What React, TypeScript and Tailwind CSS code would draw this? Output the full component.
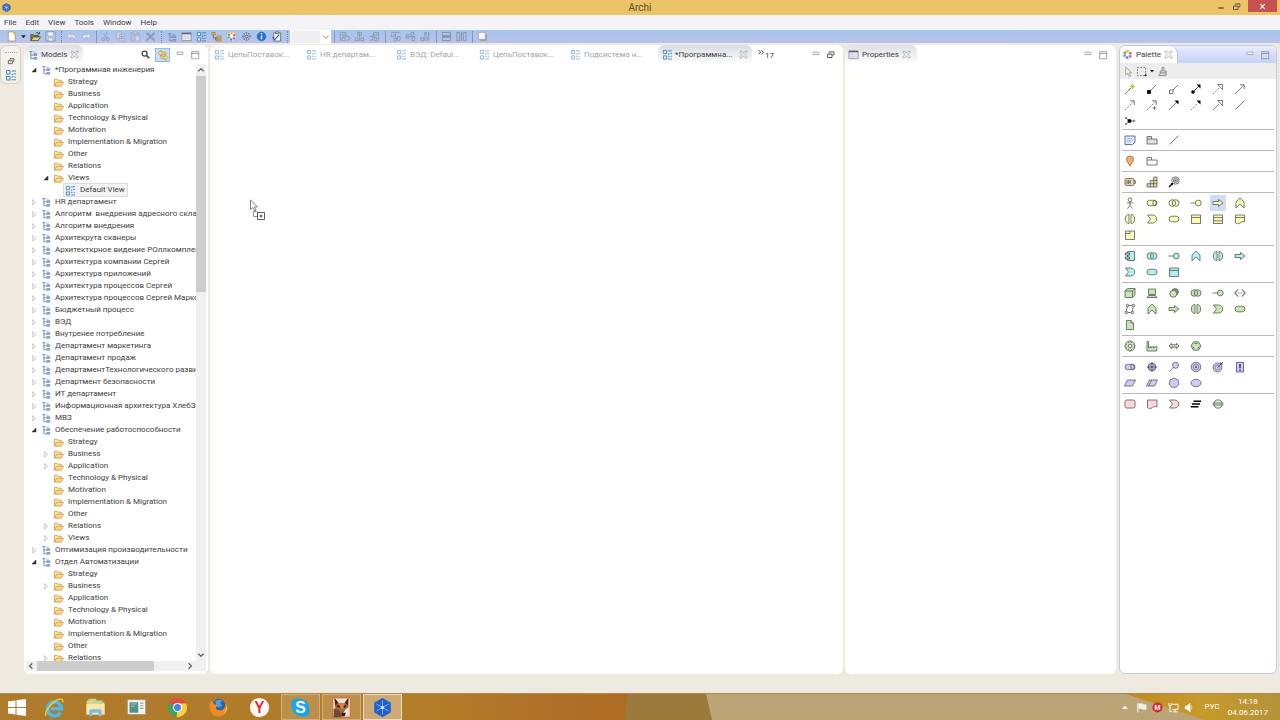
import { ReactNode } from "react";
import clsx from "clsx";

type IconProps = {
  children: ReactNode;
  className?: string;
};

type TreeRow = {
  label: string;
  level: 0 | 1 | 2;
  state?: "open" | "closed";
  selected?: boolean;
};

type EditorTab = {
  label: string;
  width: string;
};

type PaletteGroup = {
  fill: string;
  tools: string[];
};

const folders = [
  "Strategy",
  "Business",
  "Application",
  "Technology & Physical",
  "Motivation",
  "Implementation & Migration",
  "Other",
  "Relations",
  "Views",
];

function folderRows(closed: string[], open: string[] = []): TreeRow[] {
  return folders.map((label) => ({
    label,
    level: 1,
    state: open.includes(label) ? "open" : closed.includes(label) ? "closed" : undefined,
  }));
}

function closedModels(labels: string[]): TreeRow[] {
  return labels.map((label) => ({ label, level: 0, state: "closed" }));
}

const treeRows: TreeRow[] = [
  { label: "*Программная инженерия", level: 0, state: "open" },
  ...folderRows([], ["Views"]),
  { label: "Default View", level: 2, selected: true },
  ...closedModels([
    "HR департамент",
    "Алгоритм  внедрения адресного склад",
    "Алгоритм внедрения",
    "Архитекрута сканеры",
    "Архитекткрное видение РОллкомплек",
    "Архитектура компании Сергей",
    "Архитектура приложений",
    "Архитектура процессов Сергей",
    "Архитектура процессов Сергей Марко",
    "Бюджетный процесс",
    "ВЭД",
    "Внутренее потребление",
    "Департамент маркетинга",
    "Департамент продаж",
    "ДепартаментТехнологического развит",
    "Департмент безопасности",
    "ИТ департамент",
    "Информационная архитектура ХлебЗа",
    "МВЗ",
  ]),
  { label: "Обеспечение работоспособности", level: 0, state: "open" },
  ...folderRows(["Business", "Application", "Relations", "Views"]),
  { label: "Оптимизация производительности", level: 0, state: "closed" },
  { label: "Отдел Автоматизации", level: 0, state: "open" },
  ...folderRows(["Business", "Relations"]).slice(0, 8),
];

const editorTabs: EditorTab[] = [
  { label: "ЦепьПоставок...", width: "w-[92px]" },
  { label: "HR департам...", width: "w-[90px]" },
  { label: "ВЭД: Defaul...", width: "w-[83px]" },
  { label: "ЦепьПоставок...", width: "w-[91px]" },
  { label: "Подсистема н...", width: "w-[88px]" },
];

const paletteGroups: PaletteGroup[] = [
  {
    fill: "#ffffff",
    tools: [
      "magic", "composition", "aggregation", "assignment", "realization", "serving",
      "access", "influence", "triggering", "flow", "specialization", "association",
      "junction",
    ],
  },
  { fill: "#e3ecfb", tools: ["note", "group", "association"] },
  { fill: "#ffffff", tools: ["location", "grouping"] },
  { fill: "#ecd9a9", tools: ["resource", "capability", "course"] },
  {
    fill: "#fafcb4",
    tools: [
      "actor", "role", "collaboration", "interface", "process", "function",
      "interaction", "event", "service", "object", "contract", "representation",
      "product",
    ],
  },
  {
    fill: "#aef1f0",
    tools: [
      "component", "collaboration", "interface", "function", "interaction", "process",
      "event", "service", "object",
    ],
  },
  {
    fill: "#c6e6b4",
    tools: [
      "node", "device", "software", "collaboration", "interface", "path",
      "network", "function", "process", "interaction", "event", "service",
      "artifact",
    ],
  },
  { fill: "#c6e6b4", tools: ["equipment", "facility", "distribution", "material"] },
  {
    fill: "#d0cbfc",
    tools: [
      "role", "driver", "assessment", "goal", "outcome", "principle",
      "requirement", "constraint", "meaning", "value",
    ],
  },
  { fill: "#fbd6da", tools: ["work", "deliverable", "event", "plateau", "gap"] },
];

function Icon({ children, className = "size-3" }: IconProps) {
  return (
    <svg
      viewBox="0 0 12 12"
      fill="none"
      stroke="#5a5a5a"
      strokeWidth="0.8"
      className={clsx("shrink-0", className)}
      aria-hidden="true"
    >
      {children}
    </svg>
  );
}

function DiagramIcon({ className = "size-[11px]" }: { className?: string }) {
  return (
    <Icon className={className}>
      <g stroke="#3d8ab8" strokeWidth="1">
        <path d="M1.500 1.500h3.500v3.500h-3.500zM1.500 7.500h3.500v3.500h-3.500z" fill="#e4f2fa" />
        <path d="M6.500 2h4.500M8.500 4.800h2.500M6.500 8h2M9.500 8h1.500M6.500 10.800h4.500" />
        <path d="M7.200 4.800v1.500" stroke="#6a6a6a" />
      </g>
    </Icon>
  );
}

function ModelIcon() {
  return (
    <Icon className="size-[10px]">
      <path d="M1.500 2h3.500M3.500 2v8.500h3M3.500 6h3" stroke="#6a87ad" strokeWidth="1.100" />
      <path d="M7 4.500h3.500v2H7zM7 9h3.500v2H7z" fill="#a9bfdc" stroke="#5a7aa5" />
      <path d="M5.500 2.500h4" stroke="#8ea8cb" />
    </Icon>
  );
}

function FolderIcon() {
  return (
    <Icon className="size-[11px]">
      <path d="M1.500 10V2.500h3l1 1h3.500v2.200" fill="#fbe8ae" stroke="#c4933a" />
      <path d="M1.500 10l2.200-4.300h7.800l-2.500 4.300z" fill="#fbd98a" stroke="#c4933a" />
    </Icon>
  );
}

function TableIcon() {
  return (
    <Icon className="size-[11px]">
      <path d="M1 2h10v8.500H1z" fill="#e9ebf5" stroke="#7d8090" />
      <path d="M1 2.800h10" stroke="#62678c" strokeWidth="1.600" />
      <path d="M2 5.800h8M2 8h8M4.500 4.500v5" stroke="#c1c5d6" strokeWidth="0.600" />
    </Icon>
  );
}

function PaletteIcon() {
  return (
    <Icon className="size-[11px]">
      <circle cx="6" cy="6" r="5" fill="#fff" stroke="#c9b78a" strokeWidth="0.600" />
      <g stroke="none">
        <circle cx="6" cy="2.800" r="1.400" fill="#f0b43c" />
        <circle cx="9" cy="4.600" r="1.400" fill="#e0624d" />
        <circle cx="8.700" cy="7.900" r="1.400" fill="#a968c4" />
        <circle cx="5.600" cy="9.200" r="1.400" fill="#4d80d8" />
        <circle cx="3" cy="7.200" r="1.400" fill="#45aebd" />
        <circle cx="3.200" cy="4.200" r="1.400" fill="#64b04b" />
      </g>
    </Icon>
  );
}

function CloseCross() {
  return (
    <Icon className="size-[9px]">
      <path
        d="M1.500 1.500h2L6 4.200l2.500-2.700h2v2L8 6l2.500 2.500v2h-2L6 7.800l-2.500 2.700h-2v-2L4 6 1.500 3.500z"
        stroke="#888"
      />
    </Icon>
  );
}

function RestoreIcon({ className = "size-[9px]" }: { className?: string }) {
  return (
    <Icon className={className}>
      <path d="M4.500 4.500v-2h6v4h-2" stroke="#555" strokeWidth="1.300" />
      <path d="M2 5.500h6V10H2z" stroke="#555" strokeWidth="1.300" />
    </Icon>
  );
}

function MinimizeIcon() {
  return (
    <Icon className="size-[10px]">
      <path d="M2.500 2.500h7v3h-7z" stroke="#888" fill="#fff" />
    </Icon>
  );
}

function MaximizeIcon() {
  return (
    <Icon className="size-[10px]">
      <path d="M2 2h8.500v8.500H2zM2 4.200h8.500" stroke="#777" />
    </Icon>
  );
}

function ArchiLogo({ className }: { className?: string }) {
  return (
    <Icon className={className}>
      <path d="M6 .5l4.900 2.800v5.400L6 11.500 1.100 8.700V3.300z" fill="#2a68cf" stroke="#2a60b8" />
      <path d="M6 2v8M2.500 4l7 4M9.500 4l-7 4" stroke="#a9cbff" strokeWidth="0.600" />
      <circle cx="6" cy="6" r="1" fill="#fff" stroke="none" />
    </Icon>
  );
}

const dash = { strokeDasharray: "1.4 1" };

function paletteShape(name: string, fill: string): ReactNode {
  switch (name) {
    case "magic":
      return (
        <>
          <path d="M1 11l6-6" />
          <path d="M8.500 1v5M6 3.500h5M7 2l3 3M10 2L7 5" stroke="#cfc04c" strokeWidth="1" />
        </>
      );
    case "composition":
      return (
        <>
          <path d="M4 8l6-6" />
          <path d="M1.500 7.500h3v3h-3z" fill="#000" stroke="#000" />
        </>
      );
    case "aggregation":
      return (
        <>
          <path d="M5 7l5-5" />
          <path d="M1.500 7h3.500v3.500H1.500z" fill={fill} />
        </>
      );
    case "assignment":
      return (
        <>
          <path d="M3 9l6-6" stroke="#222" />
          <circle cx="3" cy="9" r="1.800" fill="#000" stroke="none" />
          <path d="M6.500 1.500H10.500V5.500z" fill="#000" stroke="none" />
        </>
      );
    case "realization":
      return (
        <>
          <path d="M1 11l6-6" {...dash} />
          <path d="M5.500 1.500h5v5z" fill={fill} />
        </>
      );
    case "serving":
      return <path d="M1 11l9-9M6 1.800h4.200V6" />;
    case "access":
      return (
        <>
          <path d="M1 11l9-9" {...dash} />
          <path d="M6 1.800h4.200V6" />
        </>
      );
    case "influence":
      return (
        <>
          <path d="M1 11l9-9" {...dash} />
          <path d="M6 1.800h4.200V6M8.500 7v4M6.500 9h4" />
        </>
      );
    case "triggering":
      return (
        <>
          <path d="M1 11l8-8" />
          <path d="M6.500 1.500h4V5.500z" fill="#000" stroke="none" />
        </>
      );
    case "flow":
      return (
        <>
          <path d="M1 11l8-8" {...dash} />
          <path d="M6.500 1.500h4V5.500z" fill="#000" stroke="none" />
        </>
      );
    case "specialization":
      return (
        <>
          <path d="M1 11l6-6" />
          <path d="M5.500 1.500h5v5z" fill={fill} />
        </>
      );
    case "association":
      return <path d="M1.500 10.500l9-9" />;
    case "junction":
      return (
        <>
          <path d="M1.500 2.500l3 3M1.500 9.500l3-3M6 6h5.500" />
          <circle cx="5.500" cy="6" r="2" fill="#000" stroke="none" />
          <path d="M1.500 4V2.500H3M1.500 8v1.500H3M9 4.800L10.500 6 9 7.200" />
        </>
      );
    case "note":
      return (
        <>
          <path d="M1 2h10v6l-2.500 2.500H1z" fill={fill} stroke="#41567e" />
          <path d="M3 4.500h5M3 6.200h6M3 8h4" stroke="#7b9ad0" strokeWidth="0.600" />
        </>
      );
    case "group":
      return <path d="M1 10V2.500h4.500V5H11v5zM1 5h4.500" fill="#dedede" />;
    case "grouping":
      return <path d="M1 10V2.500h4.500V5H11v5zM1 5h4.500" fill={fill} />;
    case "location":
      return (
        <path d="M6 11.200C5 8.500 2.500 6.800 2.500 4.200a3.500 3.200 0 017 0C9.500 6.800 7 8.500 6 11.200z" fill="#eeb070" stroke="#8f6a40" />
      );
    case "resource":
      return (
        <>
          <rect x="1" y="2.500" width="9" height="7" rx="1.500" fill={fill} />
          <path d="M10 4.500h1.200v3H10M3 4.200v3.600M4.600 4.200v3.600M6.200 4.200v3.600" strokeWidth="1" />
        </>
      );
    case "capability":
      return (
        <path d="M1 11V7.700h3.300V4.400h3.300V1.100H11V11zM4.300 7.700H11M7.600 4.400H11M4.300 7.700V11M7.600 4.400V11" fill={fill} />
      );
    case "course":
      return (
        <>
          <circle cx="7.500" cy="4.500" r="3.700" fill="#f1ece0" />
          <circle cx="7.500" cy="4.500" r="2" />
          <circle cx="7.500" cy="4.500" r="0.600" fill="#222" />
          <path d="M1 11l3-3" stroke="#000" strokeWidth="1.300" />
          <path d="M2.500 7h2.500v2.500z" fill="#000" stroke="none" />
        </>
      );
    case "actor":
      return (
        <>
          <circle cx="6" cy="2.800" r="1.900" fill={fill} />
          <path d="M6 4.700v3.500M3 6h6M6 8.200L3.500 11.500M6 8.200l2.500 3.300" />
        </>
      );
    case "role":
      return (
        <>
          <rect x="1" y="3.300" width="10" height="5.400" rx="2.700" fill={fill} />
          <ellipse cx="8.500" cy="6" rx="1.700" ry="2.500" />
        </>
      );
    case "collaboration":
      return (
        <>
          <circle cx="4.300" cy="6" r="3.300" fill={fill} />
          <circle cx="7.700" cy="6" r="3.300" fill={fill} />
          <path d="M6 3.200a3.300 3.300 0 010 5.600 3.300 3.300 0 010-5.600z" fill={fill} />
        </>
      );
    case "interface":
      return (
        <>
          <path d="M.5 6h5" />
          <circle cx="8.300" cy="6" r="2.900" fill={fill} />
        </>
      );
    case "process":
      return <path d="M1 4.500h5.500v-2L11 6 6.500 9.500v-2H1z" fill={fill} />;
    case "function":
      return <path d="M2 11V5l4-4 4 4v6L6 7z" fill={fill} />;
    case "interaction":
      return (
        <path d="M5 1.500C2.600 1.500 1.300 3.500 1.300 6S2.600 10.500 5 10.500zM7 1.500C9.400 1.500 10.700 3.500 10.700 6S9.400 10.500 7 10.500z" fill={fill} />
      );
    case "event":
      return <path d="M1.500 2h5C9 2 10.800 3.800 10.800 6S9 10 6.500 10h-5l3-4z" fill={fill} />;
    case "service":
      return <rect x="1" y="3.200" width="10" height="5.600" rx="2.800" fill={fill} />;
    case "object":
      return <path d="M1.500 2h9v8.500h-9zM1.500 4.500h9" fill={fill} />;
    case "contract":
      return <path d="M1.500 2h9v8.500h-9zM1.500 4.600h9M1.500 7.800h9" fill={fill} />;
    case "representation":
      return (
        <path d="M1.500 2h9v7c-2-1-3 0-4.500 1s-3 1-4.500 0zM1.500 4.500h9" fill={fill} />
      );
    case "product":
      return <path d="M1.500 2h9v8.500h-9zM1.500 4.500H6V2" fill={fill} />;
    case "component":
      return (
        <>
          <path d="M3.500 1.500h7v9h-7z" fill={fill} />
          <path d="M1.500 3h4v2h-4zM1.500 7h4v2h-4z" fill="#e3ffff" stroke="#333" />
        </>
      );
    case "node":
      return <path d="M1 4l2.500-2.500H11V8l-2.500 2.500H1zM1 4h7.500v6.500M8.500 4L11 1.500" fill={fill} />;
    case "device":
      return (
        <path d="M2.500 2h7v5.500h-7zM1 10.500l1.500-2h7l1.500 2z" fill={fill} />
      );
    case "software":
      return (
        <>
          <circle cx="7.200" cy="4.800" r="3.200" fill="#8a9a80" />
          <circle cx="5.300" cy="6.700" r="3.500" fill={fill} />
        </>
      );
    case "path":
      return <path d="M4 2.500L1 6l3 3.500M8 2.500L11 6 8 9.500M3.800 6h1M5.500 6h1M7.200 6h1" strokeWidth="1.100" />;
    case "network":
      return (
        <>
          <path d="M3.500 2.500h6l-1.500 7H2z" />
          <circle cx="3.500" cy="2.500" r="1.300" fill="#ddd" />
          <circle cx="9.500" cy="2.500" r="1.300" fill="#ddd" />
          <circle cx="2.300" cy="9.500" r="1.300" fill="#ddd" />
          <circle cx="8.500" cy="9.500" r="1.300" fill="#ddd" />
        </>
      );
    case "artifact":
      return <path d="M2.500 1.500h4.500l2.500 2.500v6.500h-7zM7 1.500V4h2.500" fill={fill} />;
    case "equipment":
      return (
        <>
          <path
            d="M4.800 1h2.400l.3 1.400 1.300-.7 1.500 1.500-.7 1.300 1.400.3v2.400l-1.400.3.7 1.300-1.500 1.500-1.300-.7-.3 1.400H4.800l-.3-1.400-1.300.7-1.500-1.500.7-1.300L1 7.200V4.800l1.400-.3-.7-1.300 1.500-1.500 1.300.7z"
            fill={fill}
          />
          <circle cx="6" cy="6" r="1.800" fill="#fff" />
        </>
      );
    case "facility":
      return <path d="M1 11V1.500h1.500V8L5 6.300V8l2.500-1.700V8L10 6.300h.8V11z" fill={fill} />;
    case "distribution":
      return <path d="M1 6l2.500-2.700v1.500h5V3.300L11 6 8.500 8.700V7.200h-5v1.500z" fill={fill} />;
    case "material":
      return (
        <>
          <path d="M3.500 1.800h5L11 6l-2.500 4.200h-5L1 6z" fill={fill} />
          <path d="M4.500 3.500h3M2.800 6.500l1.400 2.300M9.200 6.500L7.800 8.800" />
        </>
      );
    case "driver":
      return (
        <>
          <circle cx="6" cy="6" r="3.800" fill={fill} strokeWidth="1" />
          <path d="M6 1v10M1 6h10" stroke="#3b3950" />
          <path d="M3 3l6 6M9 3L3 9" stroke="#5b5970" strokeWidth="0.500" />
        </>
      );
    case "assessment":
      return (
        <>
          <circle cx="7.500" cy="4.300" r="3" fill={fill} />
          <path d="M5.300 6.500L1.500 10.500" />
        </>
      );
    case "goal":
      return (
        <>
          <circle cx="6" cy="6" r="4.800" fill={fill} />
          <circle cx="6" cy="6" r="2.800" strokeWidth="0.600" />
          <circle cx="6" cy="6" r="1" fill="#444" stroke="none" />
        </>
      );
    case "outcome":
      return (
        <>
          <circle cx="5.500" cy="6.500" r="4.500" fill={fill} />
          <circle cx="5.500" cy="6.500" r="2.500" strokeWidth="0.600" />
          <path d="M5.500 6.500L11 1M8.800 1.200V3.200h2" stroke="#333" />
        </>
      );
    case "principle":
      return (
        <>
          <path d="M2.500 1.500h7v9.500h-7z" fill={fill} stroke="#4a4780" />
          <path d="M6 3v4.200M6 8.300v1.400" stroke="#333" strokeWidth="1.400" />
        </>
      );
    case "requirement":
      return <path d="M3.500 3H11.500L8.500 9H.5z" fill={fill} />;
    case "constraint":
      return <path d="M3.500 3H11.500L8.500 9H.5zM5.700 3L2.700 9" fill={fill} />;
    case "meaning":
      return (
        <path d="M4 2.300C5 .8 7 .8 8 2.300c2-.3 3 1.300 2.300 2.900 1 1.300.5 3-1 3.500-.3 1.600-2 2.200-3.300 1.200-1.500 1-3.200.2-3.500-1.300C1 8 .8 6.300 1.800 5 1.300 3.400 2.300 2.100 4 2.300z" fill={fill} />
      );
    case "value":
      return <ellipse cx="6" cy="6" rx="5" ry="3.700" fill={fill} />;
    case "work":
      return <rect x="1" y="2" width="10" height="8" rx="1.500" fill={fill} />;
    case "deliverable":
      return <path d="M1.500 2h9.500v7c-2-1.200-3.300-.5-4.700.7-1.600 1-3.200 1-4.800 0z" fill={fill} />;
    case "plateau":
      return <path d="M3.500 3.300H11M2 6h8M.8 8.700H8.500" stroke="#000" strokeWidth="1.400" />;
    case "gap":
      return (
        <>
          <circle cx="6" cy="6" r="4.200" fill="#dff0d4" />
          <path d="M.5 5h11M.5 7h11" />
        </>
      );
    default:
      return null;
  }
}

function ToolButton({ label, faded, children }: { label: string; faded?: boolean; children: ReactNode }) {
  return (
    <button aria-label={label} className={clsx("flex w-[15px] items-center justify-center", faded && "opacity-50")}>
      <Icon className="size-[11px]">{children}</Icon>
    </button>
  );
}

function ToolSeparator({ dotted }: { dotted?: boolean }) {
  return (
    <span className="flex w-1.5 justify-center">
      <span
        className={clsx("h-3 border-l", dotted ? "border-dotted border-[#7282a8]" : "border-[#8496c0]")}
      />
    </span>
  );
}

function Toolbar() {
  return (
    <div className="flex h-[13px] shrink-0 items-center bg-linear-to-b from-[#a5c5ee] to-[#b9c2ea] pl-1">
      <ToolButton label="New">
        <path d="M2.500 1h5l2.500 2.500V11H2.500z" fill="#fffdf2" stroke="#9a8f70" />
        <path d="M9.500 .5v3.500M7.700 2.200h3.500" stroke="#e2b02e" strokeWidth="1.200" />
      </ToolButton>
      <button aria-label="New menu" className="flex w-[9px] justify-center">
        <Icon className="size-[7px]">
          <path d="M2 4h8l-4 5z" fill="#222" stroke="none" />
        </Icon>
      </button>
      <ToolButton label="Open">
        <path d="M1 10.500V4h3l1 1h4v2" fill="#8d8340" stroke="#3c3a1a" />
        <path d="M1 10.500l2.500-4H11.500l-2.500 4z" fill="#e5d67a" stroke="#3c3a1a" />
        <path d="M6 2.500c1.500-1.500 3-1 4 .5M10.300 1v2.300H8" stroke="#333" />
      </ToolButton>
      <ToolButton label="Save">
        <path d="M1 1h10v10H1z" fill="#c4d9ec" stroke="#7390ad" />
        <path d="M3 1h6v4.500H3zM3.500 7.500h5V11h-5z" fill="#f2f6fa" stroke="#8ba2b8" />
      </ToolButton>
      <ToolSeparator dotted />
      <ToolButton label="Undo">
        <path d="M1 5.500L5 2v2h3c3 0 3 4.500-.5 5.500C8.500 8 8 7 7 7H5v2z" fill="#dfe5f0" stroke="#a6b1c8" />
      </ToolButton>
      <ToolButton label="Redo">
        <path d="M11 5.500L7 2v2H4C1 4 1 8.500 4.500 9.500 3.500 8 4 7 5 7h2v2z" fill="#dfe5f0" stroke="#a6b1c8" />
      </ToolButton>
      <span className="flex w-1 justify-center">
        <span className="h-3 border-l border-[#8496c0]" />
      </span>
      <ToolButton label="Cut" faded>
        <path d="M8 1L4.500 8M4 3l4.500 5" stroke="#7f889c" strokeWidth="1.100" />
        <circle cx="3.500" cy="9.200" r="1.500" />
        <circle cx="8.500" cy="9.200" r="1.500" />
      </ToolButton>
      <ToolButton label="Copy" faded>
        <path d="M1.500 1h5.500v7.500H1.500zM5 3.500h5.500V11H5z" fill="#dfe3ea" stroke="#8a93a6" />
        <path d="M6.200 6h3M6.200 8h3" />
      </ToolButton>
      <ToolButton label="Paste" faded>
        <path d="M1.500 2h8v8.500h-8z" fill="#b9bec9" stroke="#8a93a6" />
        <path d="M3.500 1h4v2h-4zM5.500 5h5v6h-5z" fill="#e6e9ef" stroke="#8a93a6" />
      </ToolButton>
      <ToolButton label="Delete" faded>
        <path d="M1.500 2l9 8.500M10.500 2l-9 8.500" stroke="#6f7789" strokeWidth="2.200" />
      </ToolButton>
      <ToolSeparator dotted />
      <button aria-label="Model tree" className="flex w-[15px] justify-center">
        <ModelIcon />
      </button>
      <button aria-label="Properties" className="flex w-[15px] justify-center">
        <TableIcon />
      </button>
      <button aria-label="New view" className="flex w-[15px] justify-center">
        <DiagramIcon />
      </button>
      <ToolButton label="Navigator">
        <path d="M2.500 3v4.500h5M5 7.500V10h3" stroke="#6b5a2c" />
        <path d="M1 1.500h3.500V4H1zM6.500 5.500h4.500v2H6.500zM6.500 9h4.500v2H6.500z" fill="#f3c35a" stroke="#a47a26" />
      </ToolButton>
      <button aria-label="Palette" className="flex w-[15px] justify-center">
        <PaletteIcon />
      </button>
      <ToolButton label="Visualiser">
        <path d="M6 1v10M1 6h10M2.500 2.500l7 7M9.500 2.500l-7 7" stroke="#6c7383" strokeWidth="0.600" />
        <circle cx="6" cy="6" r="4" strokeDasharray="1.500 1" />
        <circle cx="6" cy="6" r="1.400" fill="#cfd6e4" />
      </ToolButton>
      <ToolButton label="Hints">
        <circle cx="6" cy="6" r="4.800" fill="#2a6fc6" stroke="#3c78bd" />
        <path d="M6 5v4M6 2.500v1.300" stroke="#fff" strokeWidth="1.500" />
      </ToolButton>
      <ToolButton label="Validate">
        <path d="M3 2h7.500v9H3z" fill="#f5f6f8" stroke="#555" />
        <path d="M5 1h3.500v2H5z" fill="#d8d8d8" />
        <path d="M1.500 6.500l2.500 3 5-5.500" stroke="#2b66ad" strokeWidth="1.300" />
      </ToolButton>
      <ToolSeparator dotted />
      <select
        aria-label="Zoom"
        disabled
        className="h-[14px] w-[31px] appearance-none border border-white bg-[#efeff1]"
      />
      <span className="flex h-[14px] w-[10px] items-center justify-center bg-white">
        <Icon className="size-2">
          <path d="M2 4l4 4 4-4" stroke="#888" strokeWidth="1.500" />
        </Icon>
      </span>
      <ToolSeparator />
      <ToolButton label="Align left" faded>
        <path d="M1.500 1v10M3.500 1.500h4v3h-4zM3.500 7h3v3.500h-3zM8 6h3v4H8M5 5.500h4" />
      </ToolButton>
      <ToolButton label="Align center" faded>
        <path d="M6 1v10M4 1.500h4v3H4zM1.500 7.500h3v3h-3zM7.500 7.500h3v3h-3z" />
      </ToolButton>
      <ToolButton label="Align right" faded>
        <path d="M10.500 1v10M5 1.500h4v3H5zM5.500 7h3v3.500h-3zM1 6h3v4H1M3 5.500h4" />
      </ToolButton>
      <ToolSeparator />
      <ToolButton label="Align top" faded>
        <path d="M1 1.500h10M1.500 3v3h3V3M6 3v5M8 6h3v4H8zM4.500 8h3v3h-3z" />
      </ToolButton>
      <ToolButton label="Align middle" faded>
        <path d="M1 6h10M1.500 4v4h3V4zM6.500 1.500h3v3h-3zM7.500 7h3v3.500h-3z" />
      </ToolButton>
      <ToolButton label="Align bottom" faded>
        <path d="M1 7.500h3v3H1zM5 6.500h3v3.500H5zM5 1.500h2v3H5zM9.500 1.500v9M8.500 3h2.500" />
      </ToolButton>
      <ToolSeparator />
      <ToolButton label="Match width" faded>
        <path d="M1.500 1.500h9v3.500h-9zM1.500 7h9v3.500h-9zM1 6h10" strokeWidth="1" />
      </ToolButton>
      <ToolButton label="Match height" faded>
        <path d="M1 1.500h3v9H1zM8 1.500h3v9H8zM6 1v10" strokeWidth="1" />
      </ToolButton>
      <ToolSeparator />
      <ToolButton label="Default size">
        <path d="M4 4h6.500v6.500H4z" fill="#a9b0c0" stroke="#949aa8" />
        <path d="M1.500 1.500h7.500v7.500H1.500z" fill="#f7f7f7" stroke="#9b9b9b" />
      </ToolButton>
    </div>
  );
}

function PanelButtons({ restore }: { restore?: boolean }) {
  return (
    <div className="flex items-center gap-[5px]">
      <button aria-label="Minimize">
        <MinimizeIcon />
      </button>
      <button aria-label={restore ? "Restore" : "Maximize"}>
        {restore ? <RestoreIcon /> : <MaximizeIcon />}
      </button>
    </div>
  );
}

function Twisty({ state }: { state?: "open" | "closed" }) {
  return (
    <span className="flex w-3 shrink-0 justify-center">
      {state && (
        <Icon className="size-2">
          {state === "open" ? (
            <path d="M9 3v6H3z" fill="#333" stroke="#333" />
          ) : (
            <path d="M4 2.500L8.500 6.500 4 10.500z" stroke="#999" fill="#fff" />
          )}
        </Icon>
      )}
    </span>
  );
}

function ModelsPanel() {
  return (
    <section className="flex w-[184px] shrink-0 flex-col overflow-hidden rounded-md bg-white">
      <div className="flex h-[19px] shrink-0 items-center justify-between pr-2">
        <div className="flex h-full items-center gap-[3px] rounded-t-md bg-linear-to-b from-[#dfe0e5] to-white pr-1 pl-1">
          <ModelIcon />
          <h2>Models</h2>
          <CloseCross />
        </div>
        <div className="flex items-center gap-[5px]">
          <button aria-label="Search">
            <Icon className="size-[9px]">
              <circle cx="4.800" cy="4.800" r="3.300" stroke="#444" strokeWidth="1.700" />
              <path d="M7.200 7.200L11 11" stroke="#444" strokeWidth="2.200" />
            </Icon>
          </button>
          <button
            aria-label="Link to view"
            className="flex h-[14px] w-[15px] items-center justify-center border border-[#8ebbe8] bg-[#c9e0f7]"
          >
            <Icon>
              <path d="M1 4l3-3v2h5v3H8V5H4v2z" fill="#fbe08a" stroke="#b99343" />
              <path d="M11 8.500l-3 3v-2H4v-3h1.500v1H8v-2z" fill="#fbe08a" stroke="#b99343" />
            </Icon>
          </button>
          <PanelButtons />
        </div>
      </div>
      <div className="flex min-h-0 flex-1">
        <ul className="min-w-0 flex-1 overflow-hidden pl-1">
          {treeRows.map((row, index) => (
            <li
              key={index}
              className={clsx(
                "flex h-3 items-center whitespace-pre",
                row.level === 1 && "pl-3",
                row.level === 2 && "pl-6"
              )}
            >
              <Twisty state={row.state} />
              <span
                className={clsx(
                  "flex items-center gap-1 pr-0.5 pl-px",
                  row.selected && "bg-[#f3f3f3] outline outline-[#dcdcdc]"
                )}
              >
                {row.level === 0 && <ModelIcon />}
                {row.level === 1 && <FolderIcon />}
                {row.level === 2 && <DiagramIcon />}
                {row.label}
              </span>
            </li>
          ))}
        </ul>
        <div className="mr-0.5 flex w-[10px] flex-col items-center bg-[#f0f0f0]">
          <Icon className="my-0.5 size-2">
            <path d="M2 8l4-4 4 4" stroke="#666" strokeWidth="2" />
          </Icon>
          <div className="h-[216px] w-full bg-[#cdcdcd]" />
          <Icon className="mt-auto mb-0.5 size-2">
            <path d="M2 4l4 4 4-4" stroke="#666" strokeWidth="2" />
          </Icon>
        </div>
      </div>
      <div className="mr-0.5 mb-[3px] ml-0.5 flex h-[10px] shrink-0 items-center bg-[#f0f0f0] pr-3">
        <Icon className="mr-0.5 ml-px size-2">
          <path d="M8 2L4 6l4 4" stroke="#666" strokeWidth="2" />
        </Icon>
        <div className="h-full w-[117px] bg-[#cdcdcd]" />
        <Icon className="ml-auto size-2">
          <path d="M4 2l4 4-4 4" stroke="#666" strokeWidth="2" />
        </Icon>
      </div>
    </section>
  );
}

function EditorPanel() {
  return (
    <section className="flex min-w-0 flex-1 flex-col rounded-md bg-white">
      <div className="flex h-[19px] items-center justify-between pr-2 pl-1">
        <div className="flex h-full items-center">
          {editorTabs.map((tab, index) => (
            <button
              key={index}
              className={clsx("flex items-center gap-[3px] whitespace-nowrap text-[#a3a3a3]", tab.width)}
            >
              <span className="opacity-60">
                <DiagramIcon className="block size-[11px]" />
              </span>
              {tab.label}
            </button>
          ))}
          <button className="flex h-full w-[94px] items-center justify-between rounded-t-md bg-linear-to-b from-[#d9dce3] to-white px-1 whitespace-nowrap">
            <span className="flex items-center gap-0.5">
              <DiagramIcon />
              *Программна...
            </span>
            <CloseCross />
          </button>
          <button className="flex items-start pl-1.5">
            <Icon className="size-[7px]">
              <path d="M1 2l3.500 3.500L1 9M6 2l3.500 3.500L6 9" stroke="#333" strokeWidth="1.600" />
            </Icon>
            <span className="pt-0.5 leading-[10px]">17</span>
          </button>
        </div>
        <PanelButtons restore />
      </div>
      <div className="relative flex-1">
        <svg
          viewBox="0 0 18 24"
          className="absolute top-[134px] left-[38px] h-6 w-[18px]"
          fill="#fff"
          stroke="#666"
          strokeWidth="0.800"
          aria-hidden="true"
        >
          <path d="M5.500 13.500h3l1 1h3v4h-7z" stroke="#777" />
          <path d="M2.500 2v9.500l2.300-2 1.700 3.500 1.500-.7-1.600-3.400H9.500z" />
          <path d="M9.500 14.500h7V21.500h-7z" stroke="#333" />
          <path d="M13 16.500v3M11.500 18h3" stroke="#222" />
        </svg>
      </div>
    </section>
  );
}

function PropertiesPanel() {
  return (
    <section className="w-[271px] shrink-0 rounded-md bg-white">
      <div className="flex h-[19px] items-center justify-between pr-2">
        <div className="flex h-full items-center gap-[3px] rounded-t-md bg-linear-to-b from-[#dfe0e5] to-white pr-1.5 pl-[3px]">
          <TableIcon />
          <h2>Properties</h2>
          <CloseCross />
        </div>
        <PanelButtons />
      </div>
    </section>
  );
}

function PalettePanel() {
  return (
    <section className="ml-px flex w-[158px] shrink-0 flex-col rounded-md border border-[#c3cbe0] bg-white">
      <div className="flex h-[17px] items-center justify-between rounded-t-md bg-linear-to-b from-[#e8edfd] to-[#c5d2f7] pr-1.5">
        <div className="flex h-full items-center gap-[3px] rounded-tl-md rounded-tr-lg border-r border-[#b3c0e2] bg-white pr-1 pl-0.5">
          <PaletteIcon />
          <h2>Palette</h2>
          <CloseCross />
        </div>
        <PanelButtons />
      </div>
      <div className="flex h-4 items-center gap-0.5 bg-[#ededed] pl-[3px]">
        <button aria-label="Select">
          <Icon className="size-[11px]">
            <path d="M3 1v9l2-2 1.800 3.500 1.400-.7L6.500 7.500H9.500z" fill="#f7f5e4" stroke="#8f8b72" />
          </Icon>
        </button>
        <button aria-label="Marquee">
          <Icon className="size-[11px]">
            <path d="M1.500 1.500h9v9h-9z" strokeDasharray="2 1.200" />
            <path d="M10.500 8.500v3M9 10.200h3" stroke="#222" />
          </Icon>
        </button>
        <button aria-label="Marquee menu">
          <Icon className="size-[6px]">
            <path d="M2 4h8l-4 5z" fill="#222" stroke="none" />
          </Icon>
        </button>
        <button aria-label="Format painter">
          <Icon className="size-[11px]">
            <path d="M5.500 1.500h2v4H10v2H3.500v-2h2zM3.500 7.500L2 10.500h8v-3" fill="#d5d5d5" stroke="#777" />
          </Icon>
        </button>
      </div>
      <div className="px-0.5">
        {paletteGroups.map((group, index) => (
          <div
            key={index}
            className={clsx(
              "grid grid-cols-[repeat(6,22px)] pt-0.5",
              index < 9 && "border-b border-[#b9b9b9]",
              index > 0 && "pb-0.5"
            )}
          >
            {group.tools.map((tool) => (
              <button
                key={tool}
                aria-label={tool}
                className={clsx(
                  "flex h-4 w-4 items-center justify-center",
                  index === 4 && tool === "process" && "bg-[#cfdcf3]"
                )}
              >
                <Icon>{paletteShape(tool, group.fill)}</Icon>
              </button>
            ))}
          </div>
        ))}
      </div>
    </section>
  );
}

function TaskButton({ label, open, active, children }: { label: string; open?: boolean; active?: boolean; children: ReactNode }) {
  return (
    <button
      aria-label={label}
      className={clsx(
        "flex h-full w-[39px] items-center justify-center",
        open && "border border-white/30 bg-white/15",
        active && "border border-white/60 bg-white/35"
      )}
    >
      <svg viewBox="0 0 24 24" className="size-[21px]" aria-hidden="true">
        {children}
      </svg>
    </button>
  );
}

function TrayIcon({ children }: { children: ReactNode }) {
  return (
    <Icon className="size-[11px]">
      <g stroke="#fff" strokeWidth="1">
        {children}
      </g>
    </Icon>
  );
}

function Taskbar() {
  return (
    <footer className="relative flex h-[27px] shrink-0 items-center justify-between border-t border-[#a88953] bg-[#b07c2a] text-white">
      <svg viewBox="0 0 1280 27" preserveAspectRatio="none" className="absolute inset-0 size-full" aria-hidden="true">
        <defs>
          <linearGradient id="warm" x1="0" x2="1">
            <stop offset="0" stopColor="#ae7b2c" />
            <stop offset="0.700" stopColor="#b37c28" />
            <stop offset="0.880" stopColor="#b0702a" />
            <stop offset="1" stopColor="#ae6b23" />
          </linearGradient>
          <linearGradient id="gold" x1="0" x2="1">
            <stop offset="0" stopColor="#c08a22" />
            <stop offset="0.500" stopColor="#c79a2b" />
            <stop offset="1" stopColor="#b3933a" />
          </linearGradient>
        </defs>
        <rect width="630" height="27" fill="url(#warm)" />
        <path d="M628 0H708L712 27H624z" fill="#9b7b3c" />
        <path d="M706 0H1280V27H712z" fill="#bba475" />
        <path d="M1126 0H1280V27H1205z" fill="url(#gold)" />
      </svg>
      <nav className="relative flex h-full gap-0.5">
        <button aria-label="Start" className="flex w-[33px] items-center justify-center">
          <svg viewBox="0 0 18 17" className="h-[17px] w-[18px]" fill="#fff" aria-hidden="true">
            <path d="M0 2.400l7.500-1v6.600H0zM8.500 1.200L18 0v8H8.500zM0 9h7.500v6.600L0 14.600zM8.500 9H18v8L8.500 15.800z" />
          </svg>
        </button>
        <TaskButton label="Internet Explorer">
          <path d="M19 17.500A8 8 0 1120 13.500H8" fill="none" stroke="#4cb8ee" strokeWidth="4" />
          <path d="M2.500 21.500C-.5 18 8 7 15 3.500c4-2 7-1.500 6.500 2.500" fill="none" stroke="#f2c63c" strokeWidth="1.800" />
        </TaskButton>
        <TaskButton label="File Explorer">
          <path d="M2 4h8l1 2h11v14H2z" fill="#e9cf76" />
          <path d="M4 2h9v4H4zM13 4h7v4h-7z" fill="#b7dc9a" />
          <path d="M1.500 8h21v12h-21z" fill="#f8e7a5" />
          <path d="M5 22v-6q0-2 2-2h10q2 0 2 2v6h-3.500v-4h-7v4z" fill="#79bde2" />
        </TaskButton>
        <TaskButton label="Window manager">
          <path d="M1.500 3h21v17h-21z" fill="#f3f3ee" stroke="#9a9480" />
          <path d="M4 6h10v12H4z" fill="#55918c" />
          <path d="M6 8h6M6 10.500h4" stroke="#a9cfc4" />
          <path d="M16 7h4M16 10h4M16 13h4" stroke="#9aa3ab" strokeWidth="1.200" />
        </TaskButton>
        <TaskButton label="Chrome">
          <circle cx="12" cy="12" r="11" fill="#e24a3b" />
          <path d="M12 12L2.500 6.500A11 11 0 0011.500 23z" fill="#3ba55a" />
          <path d="M12 12l-1 11A11 11 0 0022 7.500H12z" fill="#f7cf3d" />
          <circle cx="12" cy="12" r="5.200" fill="#fff" />
          <circle cx="12" cy="12" r="4" fill="#4383ea" />
        </TaskButton>
        <TaskButton label="Firefox">
          <circle cx="12" cy="12" r="10" fill="#e8741f" />
          <circle cx="12.500" cy="9.500" r="7.500" fill="#2565a8" />
          <path d="M8 5q4-3.500 9-.5-3 1-3 3 2 1 2 3-3 0-4 2-3-3-4-7.500z" fill="#4da3d9" />
          <path d="M1.500 10C2.500 6 4.500 3.500 4.500 3.500q0 3 2.500 4.500l4 1.500q-2 2-2 3.500 2 3 6.500 2 4-1 5-8Q24 16 17.500 21 9 24.500 4 18.500 1.500 14 1.500 10z" fill="#f08a24" />
          <path d="M20.500 6q2.500 9-4 13 4-1 5.700-5z" fill="#fad04a" />
        </TaskButton>
        <TaskButton label="Yandex">
          <circle cx="12" cy="12" r="11" fill="#fbf8f4" />
          <text x="12" y="18.500" textAnchor="middle" fontSize="18" fontWeight="600" fontFamily="Open Sans, sans-serif" fill="#d9232e">
            Y
          </text>
        </TaskButton>
        <TaskButton label="Skype" open>
          <circle cx="8" cy="8" r="6.500" fill="#17a6e6" />
          <circle cx="16" cy="16" r="6.500" fill="#17a6e6" />
          <circle cx="12" cy="12" r="9.800" fill="#17a6e6" />
          <text x="12" y="18.500" textAnchor="middle" fontSize="18" fontWeight="700" fontFamily="Liberation Sans, sans-serif" fill="#fff">
            S
          </text>
        </TaskButton>
        <TaskButton label="Fox" open>
          <path d="M2 1h20v22H2z" fill="#f0dfcc" stroke="#d95e3a" />
          <path d="M4 1l5 6h6l5-6v10l-1 5-5 6H9l-4-6z" fill="#a86534" />
          <path d="M4 1l4 5-3 4zM20 1l-4 5 3 4z" fill="#37231a" />
          <path d="M9 7h6l-1 7h-2z" fill="#cd8748" />
          <path d="M3 13l6 2 4 6-2 2H3z" fill="#6b4a36" />
          <path d="M20 12l-3 2-3 4 1 2 4-2z" fill="#f3ebe2" />
          <path d="M7 10l3 1.500M17 10l-2.500 1.500" stroke="#1d1410" strokeWidth="1.600" />
          <path d="M12 18h5l-1.500 4H13z" fill="#241a16" />
        </TaskButton>
        <TaskButton label="Archi" active>
          <path d="M12 1l9.500 5.500v11L12 23l-9.500-5.500v-11z" fill="#1f5fd0" />
          <path d="M12 4v16M5 8l14 8M19 8L5 16" stroke="#8fb9fa" />
          <circle cx="12" cy="12" r="1.800" fill="#e6f0ff" />
        </TaskButton>
      </nav>
      <div className="relative flex items-center pr-3">
        <div className="flex items-center gap-[5px]">
          <Icon className="mr-0.5 size-2">
            <path d="M1.500 8.500h9L6 4z" fill="#fff" stroke="none" />
          </Icon>
          <TrayIcon>
            <path d="M2 1v10.500" />
            <path d="M3 2h4v1h4v5H7V7H3z" fill="#f4efe2" strokeWidth="0.600" />
          </TrayIcon>
          <Icon className="size-[11px]">
            <circle cx="6" cy="6" r="5.500" fill="#d9272e" stroke="none" />
            <text x="6" y="8.700" textAnchor="middle" fontSize="7.500" fontWeight="700" fontFamily="Open Sans, sans-serif" fill="#fff" stroke="none">
              M
            </text>
          </Icon>
          <TrayIcon>
            <path d="M4.500 2.500h6.500v5.500H5M7.800 8v2.500M5.500 10.800h5" />
            <path d="M1 1v3h2.500V1M2.200 4v6.500h2" />
          </TrayIcon>
          <TrayIcon>
            <path d="M1.500 4.500h2L6.500 1.500v9l-3-3h-2z" fill="#fff" />
            <path d="M8.200 4q1 2 0 4" strokeWidth="0.700" />
          </TrayIcon>
        </div>
        <span className="ml-2.5">РУС</span>
        <div className="ml-2 text-center leading-[11px]">
          <p>14:18</p>
          <p>04.06.2017</p>
        </div>
      </div>
    </footer>
  );
}

export default function App() {
  return (
    <div className="flex h-screen flex-col overflow-hidden bg-[#eeeae0] font-[Roboto,sans-serif] text-[8px] leading-3 text-[#404040]">
      <header className="grid h-[15px] shrink-0 grid-cols-3 bg-[#ecc467]">
        <span className="flex items-center pl-0.5">
          <ArchiLogo className="size-[9px]" />
        </span>
        <h1 className="text-center text-[10px] leading-[15px] text-[#5b4a25]">Archi</h1>
        <div className="flex items-start justify-end gap-[7px] pr-[3px]">
          <button aria-label="Minimize window" className="flex h-3 items-center">
            <Icon className="size-2">
              <path d="M2 9h8" stroke="#5c4c28" strokeWidth="2" />
            </Icon>
          </button>
          <button aria-label="Restore window" className="flex h-3 items-center">
            <RestoreIcon />
          </button>
          <button aria-label="Close window" className="flex h-3 w-[29px] items-center justify-center bg-[#c8504f]">
            <Icon className="size-[7px]">
              <path d="M2 2l8 8M10 2l-8 8" stroke="#fff" strokeWidth="2" />
            </Icon>
          </button>
        </div>
      </header>
      <nav className="flex h-[15px] shrink-0 items-center gap-[9px] bg-[#f3f3f8] pl-1">
        <button>File</button>
        <button>Edit</button>
        <button>View</button>
        <button>Tools</button>
        <button>Window</button>
        <button>Help</button>
      </nav>
      <Toolbar />
      <main className="flex min-h-0 flex-1 gap-0.5 pt-0.5 pr-[3px] pb-[19px]">
        <aside className="mr-px flex h-[39px] w-[21px] shrink-0 flex-col items-center justify-end gap-1 rounded-md border border-[#d5d1c6] bg-[#f4f1ea] pb-0.5">
          <span className="w-3 border-t border-dotted border-[#aaa]" />
          <button aria-label="Restore view">
            <RestoreIcon className="block size-2" />
          </button>
          <button aria-label="Diagram">
            <DiagramIcon className="block size-3" />
          </button>
        </aside>
        <ModelsPanel />
        <EditorPanel />
        <PropertiesPanel />
        <PalettePanel />
      </main>
      <Taskbar />
    </div>
  );
}
